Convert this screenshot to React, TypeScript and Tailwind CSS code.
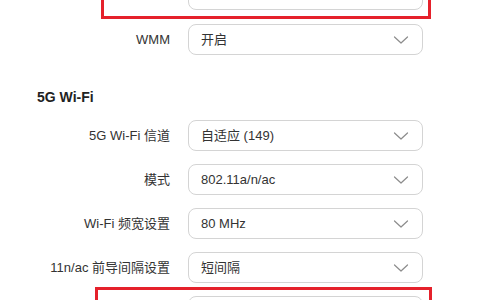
import React from 'react';

type Row = { label: string; value: string; highlight?: 'top' | 'bottom' };

const font = { fontFamily: '"Liberation Sans", "Noto Sans CJK SC", sans-serif' };

function Chevron() {
  return (
    <svg className="w-4 h-4" viewBox="0 0 16 16" fill="none">
      <path d="M1.5 5 L8 11 L14.5 5" stroke="#8c8c8c" strokeWidth="1.2" strokeLinecap="round" strokeLinejoin="round" />
    </svg>
  );
}

function SelectRow({ label, value, highlight }: Row) {
  return (
    <div className="relative flex items-center h-[31px]">
      {/* highlight frame drawn over the row */}
      {highlight === 'top' && (
        <div className="absolute left-[101px] w-[330px] -top-[9px] -bottom-[9px] border-[3px] border-[#e5212b]" />
      )}
      {highlight === 'bottom' && (
        <div className="absolute left-[95px] w-[337px] -top-[9px] -bottom-[9px] border-[3px] border-[#e5212b]" />
      )}
      <div className="w-[170px] text-right text-[13px] text-[#333]">{label}</div>
      <div className="ml-[18px] w-[235px] h-full flex items-center justify-between pl-3 pr-[13px] border border-[#d4d4d4] rounded-lg bg-white">
        <span className="text-[13px] text-[#333]">{value}</span>
        <Chevron />
      </div>
    </div>
  );
}

export default function App() {
  const rows: Row[] = [
    { label: '5G Wi-Fi 信道', value: '自适应 (149)' },
    { label: '模式', value: '802.11a/n/ac' },
    { label: 'Wi-Fi 频宽设置', value: '80 MHz' },
    { label: '11n/ac 前导间隔设置', value: '短间隔' },
    // next row is scrolled below the fold, only its frame shows
    { label: '', value: '', highlight: 'bottom' },
  ];

  return (
    <div className="w-[480px] h-[300px] overflow-hidden bg-white" style={font}>
      <div className="-mt-[21px]">
        <SelectRow label="" value="" highlight="top" />
      </div>
      <div className="mt-[14px]">
        <SelectRow label="WMM" value="开启" />
      </div>

      <div className="mt-[32px] pl-[37px] h-[20px] flex items-center text-[14px] font-bold text-[#222]">
        5G Wi-Fi
      </div>

      <div className="mt-[13px] flex flex-col gap-[13px]">
        {rows.map((r, i) => (
          <SelectRow key={i} {...r} />
        ))}
      </div>
    </div>
  );
}
